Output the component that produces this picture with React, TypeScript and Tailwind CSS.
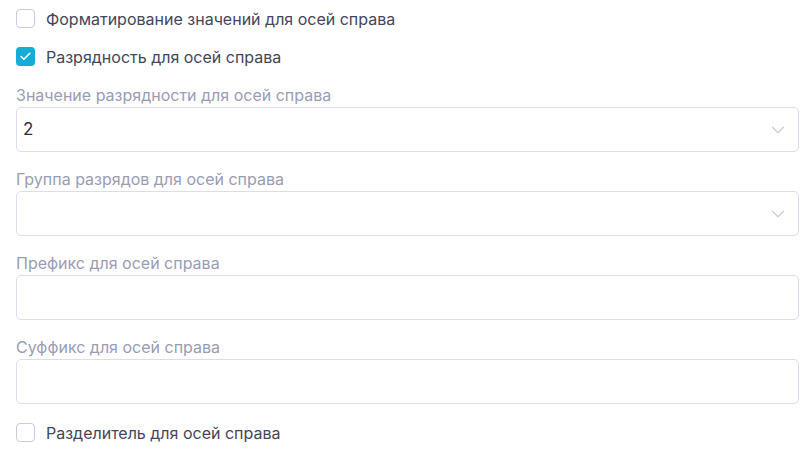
import { Check, ChevronDown } from "lucide-react";

function CheckRow({ label, checked }: { label: string; checked?: boolean }) {
  return (
    <label className="flex items-center gap-[11px] h-[19px]">
      {checked ? (
        <span className="flex items-center justify-center w-[19px] h-[19px] rounded-[4px] bg-[#15acd6]">
          <Check size={13} strokeWidth={3} className="text-white" />
        </span>
      ) : (
        <span className="w-[19px] h-[19px] rounded-[4px] border border-[#c9cbe0] bg-white" />
      )}
      <span className="text-[16px] text-[#44465a]">{label}</span>
    </label>
  );
}

function Field({ label, value, select }: { label: string; value?: string; select?: boolean }) {
  return (
    <div className="flex flex-col">
      <div className="text-[16px] leading-[20px] text-[#9a9cb4] mb-[2px]">{label}</div>
      <div className="flex items-center h-[45px] rounded-[5px] border border-[#dcdcef] bg-white pl-[6px] pr-[9px]">
        <span className="flex-1 text-[17px] text-[#2f3042]">{value}</span>
        {select && <ChevronDown size={22} strokeWidth={1.2} className="text-[#c6c8de]" />}
      </div>
    </div>
  );
}

export default function App() {
  return (
    <div className="w-[811px] h-[473px] bg-white pl-4 pr-[12px] pt-[9px]" style={{ fontFamily: "Inter, 'Noto Sans', sans-serif" }}>
      <div className="flex flex-col">
        <CheckRow label="Форматирование значений для осей справа" />
        <div className="h-[19px]" />
        <CheckRow label="Разрядность для осей справа" checked />
        <div className="h-[19px]" />
        <Field label="Значение разрядности для осей справа" value="2" select />
        <div className="h-[17px]" />
        <Field label="Группа разрядов для осей справа" select />
        <div className="h-[17px]" />
        <Field label="Префикс для осей справа" />
        <div className="h-[17px]" />
        <Field label="Суффикс для осей справа" />
        <div className="h-[19px]" />
        <CheckRow label="Разделитель для осей справа" />
      </div>
    </div>
  );
}
